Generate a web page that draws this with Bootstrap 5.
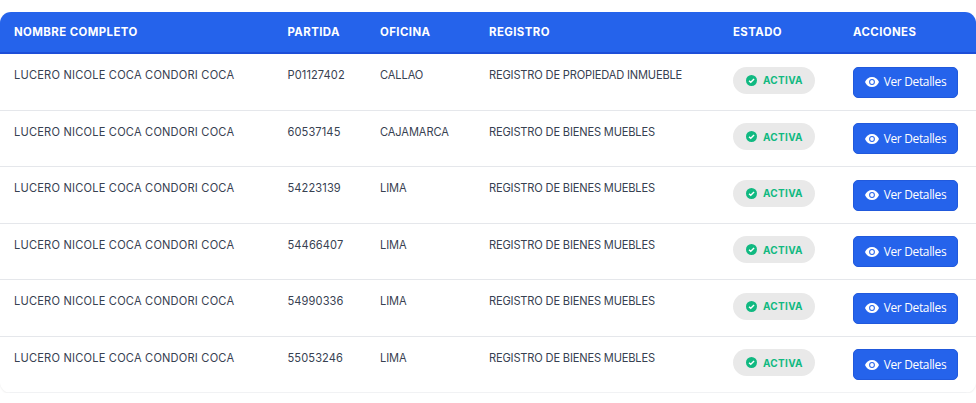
<!DOCTYPE html>
<html lang="es"><head><meta charset="utf-8"><title>Partidas</title>
<link rel="stylesheet" href="https://cdn.jsdelivr.net/npm/bootstrap@5.3.0/dist/css/bootstrap.min.css">
<style>
body{background:#fff;overflow:hidden;font-family:"Inter","Noto Sans",sans-serif}
.shell{margin:12px 0 0;border-radius:11px;overflow:hidden;box-shadow:0 1px 2px rgba(0,0,0,.07)}
.res-table{table-layout:fixed;width:976px;margin:0;border-collapse:separate;border-spacing:0}
.res-table th{background:#2563eb;color:#fff;font-size:11.4px;font-weight:700;letter-spacing:.42px;height:42.4px;padding:1px 0 0 14px;vertical-align:middle;border-bottom:2px solid #1d4ed8;text-transform:uppercase;font-family:"Inter",sans-serif}
.res-table td{height:56.5px;padding:12.8px 0 0 14px;vertical-align:top;color:#374151;font-size:11.1px;font-weight:400;border-bottom:1px solid #e5e7eb;letter-spacing:-.1px;line-height:16px}
.res-table tr:last-child td{border-bottom-color:#f1f2f4}
.res-table td.mid{padding-top:12.5px}
.res-table td.wide-txt{letter-spacing:.2px}
.res-table td.code-txt{letter-spacing:.1px}
.res-table td.reg-txt{letter-spacing:-.17px}
.state-pill{display:inline-flex;align-items:center;gap:6px;width:82px;height:27px;padding-left:13px;border-radius:14px;background:#e9e9e9;color:#10b981;font-size:10px;font-weight:700;letter-spacing:.3px}
.see-btn{display:inline-flex;align-items:center;justify-content:center;gap:5px;width:105px;height:31px;padding:0;background:#2563eb;border:1px solid #2159dc;border-radius:5px;color:#fff;font-family:"Open Sans",sans-serif;font-size:11.9px;letter-spacing:-.3px}
.see-btn:hover{background:#1d4ed8;color:#fff}
.c1{width:273.5px}.c2{width:92.5px}.c3{width:109px}.c4{width:244px}.c5{width:120px}
</style></head><body>
<div class="shell">
<table class="table res-table">
<thead><tr><th class="c1">Nombre completo</th><th class="c2">Partida</th><th class="c3">Oficina</th><th class="c4">Registro</th><th class="c5">Estado</th><th>Acciones</th></tr></thead>
<tbody id="rows">
<tr><td class="wide-txt">LUCERO NICOLE COCA CONDORI COCA</td><td class="code-txt">P01127402</td><td>CALLAO</td><td class="reg-txt">REGISTRO DE PROPIEDAD INMUEBLE</td><td class="mid"><span class="state-pill"><svg width="11" height="11" viewBox="0 0 12 12"><circle cx="6" cy="6" r="6" fill="#10b981"/><path d="M3.3 6.2 5.2 8 8.8 4.4" fill="none" stroke="#fff" stroke-width="1.5"/></svg>ACTIVA</span></td><td class="mid"><button type="button" class="btn see-btn"><svg width="14" height="10" viewBox="0 0 14 10"><path d="M7 0C3.8 0 1.2 2 0 5c1.2 3 3.8 5 7 5s5.8-2 7-5c-1.200-3-3.800-5-7-5z" fill="#fff"/><circle cx="7" cy="5" r="2.900" fill="#2563eb"/><circle cx="7" cy="5" r="1.900" fill="#fff"/></svg>Ver Detalles</button></td></tr>
<tr><td class="wide-txt">LUCERO NICOLE COCA CONDORI COCA</td><td class="code-txt">60537145</td><td>CAJAMARCA</td><td class="reg-txt">REGISTRO DE BIENES MUEBLES</td><td class="mid"><span class="state-pill"><svg width="11" height="11" viewBox="0 0 12 12"><circle cx="6" cy="6" r="6" fill="#10b981"/><path d="M3.3 6.2 5.2 8 8.8 4.4" fill="none" stroke="#fff" stroke-width="1.5"/></svg>ACTIVA</span></td><td class="mid"><button type="button" class="btn see-btn"><svg width="14" height="10" viewBox="0 0 14 10"><path d="M7 0C3.8 0 1.2 2 0 5c1.2 3 3.8 5 7 5s5.8-2 7-5c-1.200-3-3.800-5-7-5z" fill="#fff"/><circle cx="7" cy="5" r="2.900" fill="#2563eb"/><circle cx="7" cy="5" r="1.900" fill="#fff"/></svg>Ver Detalles</button></td></tr>
<tr><td class="wide-txt">LUCERO NICOLE COCA CONDORI COCA</td><td class="code-txt">54223139</td><td>LIMA</td><td class="reg-txt">REGISTRO DE BIENES MUEBLES</td><td class="mid"><span class="state-pill"><svg width="11" height="11" viewBox="0 0 12 12"><circle cx="6" cy="6" r="6" fill="#10b981"/><path d="M3.3 6.2 5.2 8 8.8 4.4" fill="none" stroke="#fff" stroke-width="1.5"/></svg>ACTIVA</span></td><td class="mid"><button type="button" class="btn see-btn"><svg width="14" height="10" viewBox="0 0 14 10"><path d="M7 0C3.8 0 1.2 2 0 5c1.2 3 3.8 5 7 5s5.8-2 7-5c-1.200-3-3.800-5-7-5z" fill="#fff"/><circle cx="7" cy="5" r="2.900" fill="#2563eb"/><circle cx="7" cy="5" r="1.900" fill="#fff"/></svg>Ver Detalles</button></td></tr>
<tr><td class="wide-txt">LUCERO NICOLE COCA CONDORI COCA</td><td class="code-txt">54466407</td><td>LIMA</td><td class="reg-txt">REGISTRO DE BIENES MUEBLES</td><td class="mid"><span class="state-pill"><svg width="11" height="11" viewBox="0 0 12 12"><circle cx="6" cy="6" r="6" fill="#10b981"/><path d="M3.3 6.2 5.2 8 8.8 4.4" fill="none" stroke="#fff" stroke-width="1.5"/></svg>ACTIVA</span></td><td class="mid"><button type="button" class="btn see-btn"><svg width="14" height="10" viewBox="0 0 14 10"><path d="M7 0C3.8 0 1.2 2 0 5c1.2 3 3.8 5 7 5s5.8-2 7-5c-1.200-3-3.800-5-7-5z" fill="#fff"/><circle cx="7" cy="5" r="2.900" fill="#2563eb"/><circle cx="7" cy="5" r="1.900" fill="#fff"/></svg>Ver Detalles</button></td></tr>
<tr><td class="wide-txt">LUCERO NICOLE COCA CONDORI COCA</td><td class="code-txt">54990336</td><td>LIMA</td><td class="reg-txt">REGISTRO DE BIENES MUEBLES</td><td class="mid"><span class="state-pill"><svg width="11" height="11" viewBox="0 0 12 12"><circle cx="6" cy="6" r="6" fill="#10b981"/><path d="M3.3 6.2 5.2 8 8.8 4.4" fill="none" stroke="#fff" stroke-width="1.5"/></svg>ACTIVA</span></td><td class="mid"><button type="button" class="btn see-btn"><svg width="14" height="10" viewBox="0 0 14 10"><path d="M7 0C3.8 0 1.2 2 0 5c1.2 3 3.8 5 7 5s5.8-2 7-5c-1.200-3-3.800-5-7-5z" fill="#fff"/><circle cx="7" cy="5" r="2.900" fill="#2563eb"/><circle cx="7" cy="5" r="1.900" fill="#fff"/></svg>Ver Detalles</button></td></tr>
<tr><td class="wide-txt">LUCERO NICOLE COCA CONDORI COCA</td><td class="code-txt">55053246</td><td>LIMA</td><td class="reg-txt">REGISTRO DE BIENES MUEBLES</td><td class="mid"><span class="state-pill"><svg width="11" height="11" viewBox="0 0 12 12"><circle cx="6" cy="6" r="6" fill="#10b981"/><path d="M3.3 6.2 5.2 8 8.8 4.4" fill="none" stroke="#fff" stroke-width="1.5"/></svg>ACTIVA</span></td><td class="mid"><button type="button" class="btn see-btn"><svg width="14" height="10" viewBox="0 0 14 10"><path d="M7 0C3.8 0 1.2 2 0 5c1.2 3 3.8 5 7 5s5.8-2 7-5c-1.200-3-3.800-5-7-5z" fill="#fff"/><circle cx="7" cy="5" r="2.900" fill="#2563eb"/><circle cx="7" cy="5" r="1.900" fill="#fff"/></svg>Ver Detalles</button></td></tr>
</tbody></table>
</div>
</body></html>
